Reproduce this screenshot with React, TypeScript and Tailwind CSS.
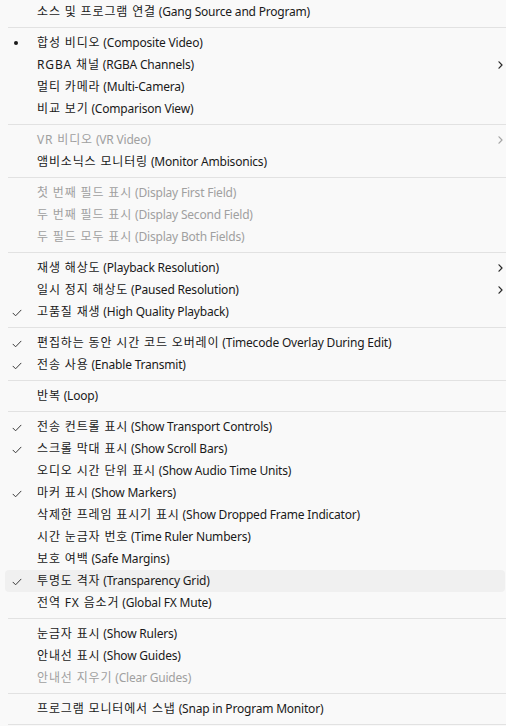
import React from 'react'

type Item =
  | { sep: true }
  | { label: string; mark?: 'check' | 'dot'; sub?: boolean; off?: boolean; hot?: boolean }

const ITEMS: Item[] = [
  { label: '소스 및 프로그램 연결 (Gang Source and Program)' },
  { sep: true },
  { label: '합성 비디오 (Composite Video)', mark: 'dot' },
  { label: 'RGBA 채널 (RGBA Channels)', sub: true },
  { label: '멀티 카메라 (Multi-Camera)' },
  { label: '비교 보기 (Comparison View)' },
  { sep: true },
  { label: 'VR 비디오 (VR Video)', sub: true, off: true },
  { label: '앰비소닉스 모니터링 (Monitor Ambisonics)' },
  { sep: true },
  { label: '첫 번째 필드 표시 (Display First Field)', off: true },
  { label: '두 번째 필드 표시 (Display Second Field)', off: true },
  { label: '두 필드 모두 표시 (Display Both Fields)', off: true },
  { sep: true },
  { label: '재생 해상도 (Playback Resolution)', sub: true },
  { label: '일시 정지 해상도 (Paused Resolution)', sub: true },
  { label: '고품질 재생 (High Quality Playback)', mark: 'check' },
  { sep: true },
  { label: '편집하는 동안 시간 코드 오버레이 (Timecode Overlay During Edit)', mark: 'check' },
  { label: '전송 사용 (Enable Transmit)', mark: 'check' },
  { sep: true },
  { label: '반복 (Loop)' },
  { sep: true },
  { label: '전송 컨트롤 표시 (Show Transport Controls)', mark: 'check' },
  { label: '스크롤 막대 표시 (Show Scroll Bars)', mark: 'check' },
  { label: '오디오 시간 단위 표시 (Show Audio Time Units)' },
  { label: '마커 표시 (Show Markers)', mark: 'check' },
  { label: '삭제한 프레임 표시기 표시 (Show Dropped Frame Indicator)' },
  { label: '시간 눈금자 번호 (Time Ruler Numbers)' },
  { label: '보호 여백 (Safe Margins)' },
  { label: '투명도 격자 (Transparency Grid)', mark: 'check', hot: true },
  { label: '전역 FX 음소거 (Global FX Mute)' },
  { sep: true },
  { label: '눈금자 표시 (Show Rulers)' },
  { label: '안내선 표시 (Show Guides)' },
  { label: '안내선 지우기 (Clear Guides)', off: true },
  { sep: true },
  { label: '프로그램 모니터에서 스냅 (Snap in Program Monitor)' },
  { sep: true },
]

function Check() {
  return (
    <svg width="10" height="8" viewBox="0 0 10 8" fill="none" className="text-[#3a3a3a]">
      <path d="M1 4.2 L3.6 6.8 L9 1.2" stroke="currentColor" strokeWidth="1" strokeLinecap="round" strokeLinejoin="round" />
    </svg>
  )
}

function Chevron() {
  return (
    <svg width="5" height="8" viewBox="0 0 5 8" fill="none" className="text-[#2a2a2a]">
      <path d="M1 0.8 L4 4 L1 7.2" stroke="currentColor" strokeWidth="1.2" strokeLinecap="round" strokeLinejoin="round" />
    </svg>
  )
}

function Row({ item }: { item: Extract<Item, { label: string }> }) {
  const cut = item.label.indexOf(' (')
  const ko = item.label.slice(0, cut)
  const en = item.label.slice(cut)
  return (
    <div
      className={`relative ml-[5px] mr-px flex h-[22px] items-center rounded pl-[32px] ${
        item.hot ? 'bg-[#f0f0f0]' : ''
      }`}
    >
      {item.mark === 'check' && (
        <span className="absolute left-[7px] top-[8px] flex">
          <Check />
        </span>
      )}
      {item.mark === 'dot' && (
        <span className="absolute left-[9px] top-[9px] h-1 w-1 rounded-full bg-[#1a1a1a]" />
      )}
      <span className={`whitespace-nowrap ${item.off ? 'text-[#a0a0a0]' : 'text-[#1a1a1a]'}`}>
        <span className="tracking-[0.85px]">{ko}</span>
        <span className="tracking-[-0.2px]">{en}</span>
      </span>
      {item.sub && (
        <span className={`absolute right-[2px] top-[7px] flex ${item.off ? 'opacity-40' : ''}`}>
          <Chevron />
        </span>
      )}
    </div>
  )
}

export default function App() {
  return (
    <div className="min-h-screen w-full overflow-hidden bg-[#f9f9f9] pt-px font-['Segoe_UI','Noto_Sans','Noto_Sans_CJK_KR',sans-serif] text-[12px] leading-none">
      {ITEMS.map((it, i) =>
        'sep' in it ? (
          <div key={i} className="ml-2 flex h-[9px] items-start pt-1">
            <div className="h-px w-full bg-[#e2e2e2]" />
          </div>
        ) : (
          <Row key={i} item={it} />
        ),
      )}
    </div>
  )
}
